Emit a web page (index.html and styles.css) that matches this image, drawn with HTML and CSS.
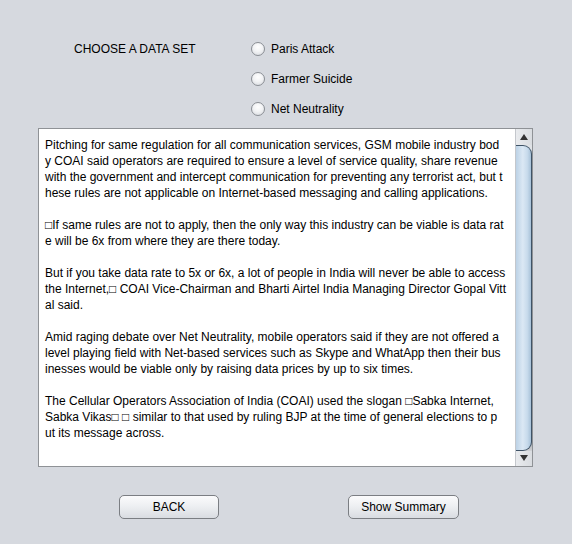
FILE: index.html
```html
<!DOCTYPE html>
<html>
<head>
<meta charset="utf-8">
<link rel="stylesheet" href="styles.css">
</head>
<body>
<div class="frame">
  <div class="chooser">
    <div class="choose-label">CHOOSE A DATA SET</div>
    <div class="radios">
      <label class="radio"><span class="dot"></span><span>Paris Attack</span></label>
      <label class="radio"><span class="dot"></span><span>Farmer Suicide</span></label>
      <label class="radio"><span class="dot"></span><span>Net Neutrality</span></label>
    </div>
  </div>
  <div class="textarea">
    <div class="text">Pitching for same regulation for all communication services, GSM mobile industry bod
y COAI said operators are required to ensure a level of service quality, share revenue
with the government and intercept communication for preventing any terrorist act, but t
hese rules are not applicable on Internet-based messaging and calling applications.

□If same rules are not to apply, then the only way this industry can be viable is data rat
e will be 6x from where they are there today.

But if you take data rate to 5x or 6x, a lot of people in India will never be able to access
the Internet,□ COAI Vice-Chairman and Bharti Airtel India Managing Director Gopal Vitt
al said.

Amid raging debate over Net Neutrality, mobile operators said if they are not offered a
level playing field with Net-based services such as Skype and WhatApp then their bus
inesses would be viable only by raising data prices by up to six times.

The Cellular Operators Association of India (COAI) used the slogan □Sabka Internet,
Sabka Vikas□ □ similar to that used by ruling BJP at the time of general elections to p
ut its message across.</div>
    <div class="scrollbar">
      <div class="arrow up"></div>
      <div class="track"><div class="thumb"></div></div>
      <div class="arrow down"></div>
    </div>
  </div>
  <div class="buttons">
    <button class="btn back">BACK</button>
    <button class="btn summary">Show Summary</button>
  </div>
</div>
</body>
</html>
```
FILE: styles.css
```css
html, body {
  margin: 0;
  padding: 0;
  background: #d6d9df;
}
body {
  width: 572px;
  height: 544px;
  overflow: hidden;
  font-family: "Liberation Sans", Arial, sans-serif;
  font-size: 12px;
  color: #000;
}
.frame {
  display: flex;
  flex-direction: column;
  padding-top: 34px;
}
.chooser {
  display: flex;
  padding-left: 74px;
}
.choose-label {
  width: 177px;
  height: 30px;
  line-height: 30px;
}
.radios {
  display: flex;
  flex-direction: column;
}
.radio {
  display: flex;
  align-items: center;
  height: 30px;
  gap: 6px;
}
.dot {
  box-sizing: border-box;
  width: 14px;
  height: 14px;
  border-radius: 50%;
  border: 1px solid #8a8e94;
  background: radial-gradient(circle at 50% 35%, #ffffff 0%, #f2f3f5 45%, #d3d6db 100%);
}
.textarea {
  box-sizing: border-box;
  margin-top: 4px;
  margin-left: 38px;
  width: 495px;
  height: 339px;
  border: 1px solid #8f9296;
  background: #fff;
  display: flex;
}
.text {
  flex: 1;
  white-space: pre;
  line-height: 16px;
  padding: 8px 0 0 6px;
  overflow: hidden;
}
.scrollbar {
  width: 16px;
  display: flex;
  flex-direction: column;
  background: #dfe2e6;
  border-left: 1px solid #c4c7cc;
}
.arrow {
  height: 16px;
  display: flex;
  align-items: center;
  justify-content: center;
  background: linear-gradient(to right, #e9ebee, #d9dce0);
}
.arrow::after {
  content: "";
  width: 0;
  height: 0;
  border-left: 4px solid transparent;
  border-right: 4px solid transparent;
}
.arrow.up::after {
  border-bottom: 6px solid #333;
}
.arrow.down::after {
  border-top: 6px solid #333;
}
.track {
  flex: 1;
  display: flex;
  flex-direction: column;
  background: linear-gradient(to bottom, #dfe2e6 0%, #dfe2e6 92%, #9a9ca0 96%, #d0d2d6 100%);
}
.thumb {
  box-sizing: border-box;
  height: 306px;
  border: 1px solid #3f5366;
  border-left: none;
  border-radius: 0 9px 9px 0;
  background: linear-gradient(to right, #bcd2e6 0%, #dbe8f4 45%, #c8dbec 75%, #a7c1d8 100%);
}
.buttons {
  display: flex;
  margin-top: 28px;
  padding-left: 119px;
  gap: 129px;
}
.btn {
  box-sizing: border-box;
  height: 24px;
  border: 1px solid #7b7e83;
  border-radius: 5px;
  background: linear-gradient(to bottom, #fbfbfc 0%, #eceef1 50%, #d9dce1 100%);
  font-family: "Liberation Sans", Arial, sans-serif;
  font-size: 12px;
  color: #000;
  padding: 0;
}
.back {
  width: 100px;
}
.summary {
  width: 111px;
}
```
